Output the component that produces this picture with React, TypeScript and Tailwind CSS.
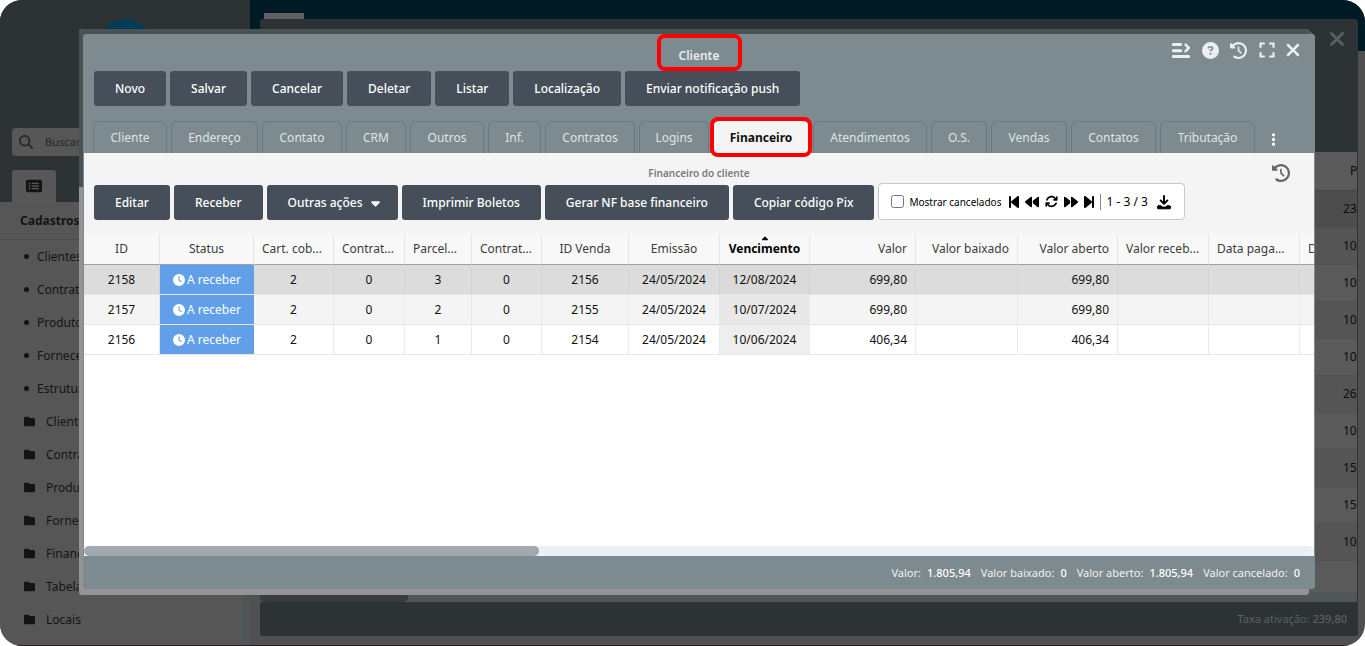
import { useState } from "react";
import {
  FaArrowsRotate, FaBackward, FaBackwardStep, FaCaretDown, FaCaretUp, FaCircleQuestion, FaClock,
  FaClockRotateLeft, FaEllipsisVertical, FaFolder, FaForward, FaForwardStep,
  FaMagnifyingGlass, FaRectangleList, FaXmark,
} from "react-icons/fa6";
import { MdFullscreen } from "react-icons/md";

const ACTIONS = ["Novo", "Salvar", "Cancelar", "Deletar", "Listar", "Localização", "Enviar notificação push"];

const TABS = [
  { label: "Cliente", width: "w-[74px]" },
  { label: "Endereço", width: "w-[87px]" },
  { label: "Contato", width: "w-[80px]" },
  { label: "CRM", width: "w-[60px]" },
  { label: "Outros", width: "w-[74px]" },
  { label: "Inf.", width: "w-[53px]" },
  { label: "Contratos", width: "w-[90px]" },
  { label: "Logins", width: "w-[70px]" },
  { label: "Financeiro", width: "w-[96px]" },
  { label: "Atendimentos", width: "w-[114px]" },
  { label: "O.S.", width: "w-[56px]" },
  { label: "Vendas", width: "w-[76px]" },
  { label: "Contatos", width: "w-[85px]" },
  { label: "Tributação", width: "w-[95px]" },
];

const LINKS = ["Clientes", "Contratos", "Produtos", "Fornecedores", "Estrutura"];
const FOLDERS = ["Clientes", "Contratos", "Produtos", "Fornecedores", "Financeiro", "Tabelas", "Locais"];

const COLUMNS = [
  { label: "ID", width: "w-[76px]", align: "text-center" },
  { label: "Status", width: "w-[94px]", align: "text-center" },
  { label: "Cart. cob...", width: "w-[80px]", align: "text-left" },
  { label: "Contrat...", width: "w-[71px]", align: "text-left" },
  { label: "Parcel...", width: "w-[67px]", align: "text-left" },
  { label: "Contrat...", width: "w-[70px]", align: "text-left" },
  { label: "ID Venda", width: "w-[87px]", align: "text-center" },
  { label: "Emissão", width: "w-[91px]", align: "text-center" },
  { label: "Vencimento", width: "w-[90px]", align: "text-center" },
  { label: "Valor", width: "w-[106px]", align: "text-right" },
  { label: "Valor baixado", width: "w-[102px]", align: "text-right" },
  { label: "Valor aberto", width: "w-[100px]", align: "text-right" },
  { label: "Valor receb...", width: "w-[91px]", align: "text-left" },
  { label: "Data paga...", width: "w-[91px]", align: "text-left" },
  { label: "Data", width: "w-[91px]", align: "text-left" },
];

const SORTED = 8;

const ROWS = [
  ["2158", "A receber", "2", "0", "3", "0", "2156", "24/05/2024", "12/08/2024", "699,80", "", "699,80", "", "", ""],
  ["2157", "A receber", "2", "0", "2", "0", "2155", "24/05/2024", "10/07/2024", "699,80", "", "699,80", "", "", ""],
  ["2156", "A receber", "2", "0", "1", "0", "2154", "24/05/2024", "10/06/2024", "406,34", "", "406,34", "", "", ""],
];

const ROW_BG = ["bg-[#dcdcdc]", "bg-[#f4f4f4]", "bg-white"];
const SORTED_BG = ["bg-[#dadada]", "bg-[#e8e8e8]", "bg-[#eeeeee]"];

const TOTALS = [
  ["Valor:", "1.805,94"],
  ["Valor baixado:", "0"],
  ["Valor aberto:", "1.805,94"],
  ["Valor cancelado:", "0"],
];

const BACK_DATES = ["23/", "10/", "10/", "10/", "10/", "26/", "10/", "15/", "15/", "10/"];

/* ── Ícones próprios ─────────────────────────────────────────────────── */
function MenuArrowIcon() {
  return (
    <svg viewBox="0 0 20 18" className="w-5 h-[18px]" fill="none" stroke="currentColor" strokeLinecap="round" strokeLinejoin="round">
      <path d="M2.3 3.5h7.4M2.3 9.7h7.4M2.3 15.6h15.4" strokeWidth="3" />
      <path d="M14.6 3.6l3.2 3.3-3.2 3.3" strokeWidth="2.6" />
    </svg>
  );
}

function DownloadIcon() {
  return (
    <svg viewBox="0 0 16 16" className="w-4 h-4" fill="none" stroke="currentColor" strokeLinecap="round" strokeLinejoin="round">
      <path d="M8 2v7.5M4.6 6.4L8 9.8l3.4-3.4" strokeWidth="1.9" />
      <path d="M2.4 11.8H5l1.6 1.3h2.8l1.6-1.3h2.6a1 1 0 0 1 1 1v1a1 1 0 0 1-1 1H2.4a1 1 0 0 1-1-1v-1a1 1 0 0 1 1-1z" fill="currentColor" strokeWidth="1" />
    </svg>
  );
}

/* ── Botão padrão das barras ─────────────────────────────────────────── */
function BarButton({ label, caret }: { label: string; caret?: boolean }) {
  return (
    <button
      type="button"
      className={`flex items-center gap-2 h-[35px] pl-[21px] rounded-[3px] bg-[#464f59] text-white font-medium whitespace-nowrap ${caret ? "pr-[18px]" : "pr-[21px]"}`}
    >
      {label}
      {caret && <FaCaretDown className="w-[9px] h-[14px]" />}
    </button>
  );
}

/* ── Menu lateral ────────────────────────────────────────────────────── */
function Sidebar() {
  return (
    <aside className="flex flex-col w-[250px] shrink-0 bg-[#565656] text-[#141414] border-b border-[#2a1a22]">
      <div className="bg-[#2d3234] h-[202px] shrink-0 flex flex-col pt-[19px] pl-3">
        <div className="w-[52px] h-[52px] ml-[87px] rounded-full bg-[#003b57]" />
        <label className="flex items-center gap-3 mt-[57px] mr-3 h-7 pl-[7px] rounded bg-[#575757]">
          <FaMagnifyingGlass className="w-[14px] h-[14px] shrink-0 text-[#262626]" />
          <input
            type="search"
            aria-label="Buscar"
            placeholder="Buscar"
            className="w-full bg-transparent text-[11px] outline-none placeholder:text-[#262626]"
          />
        </label>
        <div className="flex items-center justify-center w-11 h-8 mt-[14px] rounded-t-[3px] bg-[#575757]">
          <FaRectangleList className="w-4 h-4" />
        </div>
      </div>
      <div className="flex-1 overflow-hidden border-r-8 border-[#505557]">
        <h2 className="h-[38px] pl-5 leading-[37px] font-bold border-b border-[#4c4c4c]">Cadastros</h2>
        <nav>
          {LINKS.map(l => (
            <a key={l} href="#" className="flex items-center gap-2 h-[33px] pl-6">
              <span className="w-[5px] h-[5px] rounded-full bg-[#141414]" />
              {l}
            </a>
          ))}
          {FOLDERS.map(f => (
            <a key={f} href="#" className="flex items-center gap-[11px] h-[33px] pl-6">
              <FaFolder className="w-[11px] h-[11px]" />
              {f}
            </a>
          ))}
        </nav>
      </div>
    </aside>
  );
}

/* ── Janela de fundo ─────────────────────────────────────────────────── */
function backRowBg(i: number) {
  if (i === 0) return "bg-[#4d4d4d]";
  return i % 2 ? "bg-[#555555]" : "bg-[#5a5a5a]";
}

function BackWindow() {
  return (
    <section className="absolute left-[260px] right-[7px] top-[19px] bottom-[10px] flex flex-col rounded-[3px] overflow-hidden bg-[#2d3234]">
      <header className="h-[133px] shrink-0 flex justify-end gap-3 pt-[9px] pr-[10px] text-[#5c6061]">
        <FaCircleQuestion className="w-[17px] h-[17px] mt-[2px]" />
        <FaXmark className="w-[22px] h-[22px]" />
      </header>
      <div className="flex-1 flex flex-col mr-px bg-[#5a5a5a] overflow-hidden">
        <table className="w-full table-fixed text-[#0c0c0c]">
          <thead>
            <tr className="h-[38px] border-b border-[#444]">
              <th />
              <th className="w-[7px] p-0 font-normal text-left whitespace-nowrap">P</th>
            </tr>
          </thead>
        </table>
        <table className="w-full table-fixed text-[#0c0c0c]">
          <tbody>
            {BACK_DATES.map((d, i) => (
              <tr key={i} className={`h-[37px] border-b border-[#505050] ${backRowBg(i)}`}>
                <td />
                <td className="w-[14px] p-0 whitespace-nowrap">{d}</td>
              </tr>
            ))}
          </tbody>
        </table>
        <div className="flex-1" />
        <div className="h-[10px] bg-[#505557]">
          <div className="w-[148px] h-full rounded-full bg-[#383c3e]" />
        </div>
      </div>
      <footer className="h-[34px] shrink-0 flex items-center justify-end pr-[11px] text-[11px] text-[#5c6061]">
        Taxa ativação:&nbsp;<span className="font-medium">239,80</span>
      </footer>
    </section>
  );
}

/* ── Tabela financeira ───────────────────────────────────────────────── */
function FinanceTable() {
  return (
    <table className="w-[1307px] table-fixed border-separate border-spacing-0">
      <thead>
        <tr className="h-[31px] bg-[#f8f8f8] text-[#3c3c3c]">
          {COLUMNS.map((c, i) => (
            <th
              key={i}
              className={`${c.width} ${c.align} relative px-2 py-0 border-r border-r-[#e6e6e6] border-b border-b-[#98a4ad] whitespace-nowrap ${i === SORTED ? "font-bold text-black" : "font-normal"}`}
            >
              {i === SORTED && <FaCaretUp className="absolute top-0 left-1/2 -translate-x-1/2 w-[10px] h-[10px]" />}
              {c.label}
            </th>
          ))}
        </tr>
      </thead>
      <tbody className="text-[#111]">
        {ROWS.map((row, r) => (
          <tr key={row[0]} className={`h-[30px] ${ROW_BG[r]}`}>
            {row.map((cell, i) =>
              i === 1 ? (
                <td key={i} className="p-0 bg-[#629fe9] text-white border-b border-[#e6e6e6]">
                  <span className="flex items-center justify-center gap-[2px]">
                    <FaClock className="w-3 h-3" />
                    {cell}
                  </span>
                </td>
              ) : (
                <td
                  key={i}
                  className={`px-2 py-0 border-r border-b border-b-[#e6e6e6] ${r === 0 ? "border-r-[#d2d2d2]" : "border-r-[#ebebeb]"} ${i > 8 ? "text-right" : "text-center"} ${i === SORTED ? SORTED_BG[r] : ""}`}
                >
                  {cell}
                </td>
              )
            )}
          </tr>
        ))}
      </tbody>
    </table>
  );
}

/* ── Janela do cliente ───────────────────────────────────────────────── */
function ClientWindow() {
  const [tab, setTab] = useState(8);
  const [cancelled, setCancelled] = useState(false);

  return (
    <section className="absolute left-[83px] right-[50px] top-[34px] bottom-[57px] flex flex-col rounded-[3px] bg-[#7d8a8f]">
      <header className="h-[119px] shrink-0 flex flex-col">
        <div className="grid grid-cols-[1fr_auto_1fr]">
          <span />
          <h1 className="flex items-center justify-center w-[85px] h-[37px] pt-[6px] rounded-lg border-4 border-[#ff0000] font-semibold text-[#e6eaec]">
            Cliente
          </h1>
          <div className="flex items-center justify-end h-8 gap-[11px] pr-3 text-[#eceeef]">
            <button type="button" aria-label="Menu"><MenuArrowIcon /></button>
            <button type="button" aria-label="Ajuda"><FaCircleQuestion className="w-[17px] h-[17px]" /></button>
            <button type="button" aria-label="Histórico"><FaClockRotateLeft className="w-[17px] h-[17px]" /></button>
            <button type="button" aria-label="Tela cheia" className="-mx-1"><MdFullscreen className="w-[26px] h-[26px]" /></button>
            <button type="button" aria-label="Fechar" className="-ml-1"><FaXmark className="w-5 h-5" /></button>
          </div>
        </div>
        <div className="flex gap-1 pl-[11px]">
          {ACTIONS.map(a => <BarButton key={a} label={a} />)}
        </div>
        <div className="flex items-end gap-1 mt-auto pl-[10px]" role="tablist">
          {TABS.map((t, i) => (
            <button
              key={i}
              type="button"
              role="tab"
              aria-selected={tab === i}
              onClick={() => setTab(i)}
              className={`relative h-8 rounded-t-md border border-b-0 whitespace-nowrap ${t.width} ${
                tab === i ? "z-10 bg-[#f4f4f4] border-[#f4f4f4] text-[#111] font-bold" : "border-[#6c7981] text-[#dfe4e6]"
              }`}
            >
              {t.label}
              {i === 8 && <span className="absolute -inset-x-1 -top-[5px] -bottom-1 rounded-lg border-4 border-[#ff0000]" />}
            </button>
          ))}
          <button type="button" aria-label="Mais abas" className="flex items-center justify-center h-7 w-7 text-white">
            <FaEllipsisVertical className="w-[15px] h-[15px]" />
          </button>
        </div>
      </header>

      <div className="flex-1 flex flex-col mx-px bg-white overflow-hidden">
        <div className="bg-[#f4f4f4] pb-[14px]">
          <div className="grid grid-cols-[1fr_auto_1fr] h-[30px] pt-[10px]">
            <span />
            <h2 className="text-[10px] leading-5 font-semibold text-[#7a7a7a]">Financeiro do cliente</h2>
            <button type="button" aria-label="Histórico do financeiro" className="justify-self-end mr-[24px] text-[#666]">
              <FaClockRotateLeft className="w-[18px] h-[18px]" />
            </button>
          </div>
          <div className="flex items-end gap-1 pl-[10px]">
            <BarButton label="Editar" />
            <BarButton label="Receber" />
            <BarButton label="Outras ações" caret />
            <BarButton label="Imprimir Boletos" />
            <BarButton label="Gerar NF base financeiro" />
            <BarButton label="Copiar código Pix" />
            <div className="flex items-center gap-[6px] h-[37px] px-3 rounded border border-[#c8c8c8] bg-white text-black">
              <label className="flex items-center gap-[5px] pr-[2px] text-[10px] whitespace-nowrap">
                <input
                  type="checkbox"
                  checked={cancelled}
                  onChange={e => setCancelled(e.target.checked)}
                  className="w-[13px] h-[13px]"
                />
                Mostrar cancelados
              </label>
              <button type="button" aria-label="Primeira página"><FaBackwardStep className="w-[10px] h-4" /></button>
              <button type="button" aria-label="Página anterior"><FaBackward className="w-[14px] h-[14px]" /></button>
              <button type="button" aria-label="Atualizar"><FaArrowsRotate className="w-[13px] h-[13px]" /></button>
              <button type="button" aria-label="Próxima página"><FaForward className="w-[14px] h-[14px]" /></button>
              <button type="button" aria-label="Última página"><FaForwardStep className="w-[10px] h-4" /></button>
              <span className="pl-[5px] border-l border-[#888] whitespace-nowrap">1 - 3 / 3</span>
              <button type="button" aria-label="Baixar" className="ml-[2px]"><DownloadIcon /></button>
            </div>
          </div>
        </div>
        <div className="flex-1 overflow-hidden">
          <FinanceTable />
        </div>
        <div className="h-[10px] rounded-full bg-[#e9f1f5]">
          <div className="w-[37%] h-full rounded-full bg-[#a1a9b0]" />
        </div>
      </div>

      <footer className="h-[33px] shrink-0 flex items-center justify-end gap-[10px] pr-[15px] text-[11px] text-[#eef1f2]">
        {TOTALS.map(([label, value]) => (
          <span key={label} className="flex gap-[6px]">
            {label}
            <span className="font-medium text-white">{value}</span>
          </span>
        ))}
      </footer>
    </section>
  );
}

/* ── Página ──────────────────────────────────────────────────────────── */
export default function App() {
  return (
    <div className="h-screen bg-white text-[12px] leading-4 font-['Noto_Sans','Open_Sans',sans-serif]">
      <div className="relative flex h-full rounded-[22px] overflow-hidden bg-[#505050]">
        <Sidebar />
        <main className="flex-1 border-b border-[#2a1a22]">
          <div className="h-[51px] pt-[13px] pl-[14px] bg-[#001a26]">
            <div className="w-10 h-[6px] bg-[#5f6062]" />
          </div>
        </main>
        <BackWindow />
        {/* janela intermediária, quase toda coberta */}
        <div className="absolute left-[79px] right-[56px] top-[29px] bottom-[51px] flex flex-col rounded-[3px] overflow-hidden bg-[#949494]">
          <div className="h-[158px] bg-[#4a5254]" />
        </div>
        <ClientWindow />
      </div>
    </div>
  );
}
